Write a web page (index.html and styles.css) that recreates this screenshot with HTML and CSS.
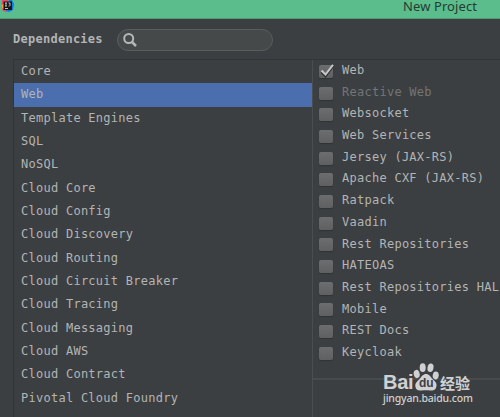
FILE: index.html
```html
<!DOCTYPE html>
<html lang="en">
<head>
<meta charset="utf-8">
<title>New Project</title>
<link rel="stylesheet" href="styles.css">
</head>
<body>
<div class="window">
  <header class="titlebar">
    <svg class="app-icon" width="14" height="13" viewBox="0 0 14 13">
      <path d="M1 0h6l2 4-3 8-4-1L0 7z" fill="#ee4668"/>
      <path d="M0 5l3-1v5l-2-1z" fill="#f59a3e"/>
      <path d="M8 0h3l2 4-1 6-4 2-3-1z" fill="#087dea"/>
      <rect x="2.500" y="1.500" width="8.500" height="8.500" fill="#171719"/>
      <path d="M4 3h2M5 3v3M4 6h2M7.500 3h1.500v2.500L8.500 6h-1M4 8.500h3" stroke="#d5d5d5" stroke-width=".9" fill="none"/>
    </svg>
    <h1 class="title">New Project</h1>
  </header>
  <div class="toolbar">
    <span class="heading">Dependencies</span>
    <div class="search">
      <svg width="14" height="14" viewBox="0 0 14 14" fill="none" stroke="#b5b6b7"><circle cx="5.700" cy="5.500" r="4.500" stroke-width="2"/><path d="M9 9l4 4" stroke-width="2.500"/></svg>
    </div>
  </div>
  <main class="content">
    <ul class="categories">
      <li>Core</li>
      <li class="selected">Web</li>
      <li>Template Engines</li>
      <li>SQL</li>
      <li>NoSQL</li>
      <li>Cloud Core</li>
      <li>Cloud Config</li>
      <li>Cloud Discovery</li>
      <li>Cloud Routing</li>
      <li>Cloud Circuit Breaker</li>
      <li>Cloud Tracing</li>
      <li>Cloud Messaging</li>
      <li>Cloud AWS</li>
      <li>Cloud Contract</li>
      <li>Pivotal Cloud Foundry</li>
    </ul>
    <section class="details">
      <ul class="options">
        <li><i class="box"><svg width="16" height="14" viewBox="0 0 16 14" fill="none"><path d="M2.500 8l4 4L14 2" stroke="#303233" stroke-width="2.500"/><path d="M2.500 6.500l4 4L14 .800" stroke="#c8c8c8" stroke-width="2"/></svg></i>Web</li>
        <li class="disabled"><i class="box"></i>Reactive Web</li>
        <li><i class="box"></i>Websocket</li>
        <li><i class="box"></i>Web Services</li>
        <li><i class="box"></i>Jersey (JAX-RS)</li>
        <li><i class="box"></i>Apache CXF (JAX-RS)</li>
        <li><i class="box"></i>Ratpack</li>
        <li><i class="box"></i>Vaadin</li>
        <li><i class="box"></i>Rest Repositories</li>
        <li><i class="box"></i>HATEOAS</li>
        <li><i class="box"></i>Rest Repositories HAL</li>
        <li><i class="box"></i>Mobile</li>
        <li><i class="box"></i>REST Docs</li>
        <li><i class="box"></i>Keycloak</li>
      </ul>
    </section>
  </main>
  <div class="watermark">
    <div class="brand">
      <span class="bai">Bai</span>
      <span class="paw">
        <svg width="26" height="28" viewBox="0 0 26 28" fill="#d0d1d2">
          <ellipse cx="3.700" cy="11" rx="3" ry="4.200" transform="rotate(-12 3.700 11)"/>
          <ellipse cx="9.700" cy="4.700" rx="3" ry="4.400"/>
          <ellipse cx="17.500" cy="4.800" rx="3" ry="4.300" transform="rotate(10 17.500 4.800)"/>
          <ellipse cx="22.700" cy="12.500" rx="3" ry="4" transform="rotate(10 22.700 12.500)"/>
          <path d="M13 11c3 0 4.500 2.500 6 4.500 2.500 2.500 5 4 4.500 7.500-.5 4-3 5-6 4.500-3-.5-6-.5-9 0C5 28 2.500 26.500 2.300 23c-.2-3.500 2.700-5 4.700-7.500 1.500-2 3-4.500 6-4.500z"/>
        </svg>
        <span class="du">du</span>
      </span>
      <span class="cn">经验</span>
    </div>
    <div class="site">jingyan.baidu.com</div>
  </div>
</div>
</body>
</html>
```
FILE: styles.css
```css
* {
  box-sizing: border-box;
}

body {
  margin: 0;
  background: #3c3f41;
}

ul {
  list-style: none;
  margin: 0;
  padding: 0;
}

.window {
  position: relative;
  display: flex;
  flex-direction: column;
  width: 500px;
  height: 417px;
  overflow: hidden;
  background: #3c3f41;
  color: #b2b4b5;
  font: 12px "DejaVu Sans Mono", monospace;
  letter-spacing: 0.26px;
}

.titlebar {
  display: flex;
  justify-content: space-between;
  align-items: flex-start;
  height: 19px;
  flex: none;
  padding: 0 23px 0 1px;
  background: #5bbd8c;
  border-bottom: 1px solid #4e9c77;
}

.title {
  margin: 0;
  font: 13px/13px "Noto Sans", sans-serif;
  letter-spacing: 0.08px;
  color: #263b32;
}

.toolbar {
  display: flex;
  align-items: center;
  height: 40px;
  flex: none;
  padding-left: 13px;
  gap: 14px;
}

.heading {
  width: 90px;
  font-weight: bold;
  line-height: 14px;
}

.search {
  display: flex;
  align-items: center;
  width: 156px;
  height: 22px;
  margin-top: 2px;
  padding-left: 5px;
  border: 1px solid #5a5d5e;
  border-radius: 11px;
  background: #45494a;
}

.content {
  display: flex;
  flex: 1;
  margin-left: 13px;
  min-height: 0;
  border-top: 1px solid #323436;
  border-left: 1px solid #323436;
}

.categories {
  width: 298px;
}

.categories li {
  height: 23.35px;
  padding-left: 7px;
  line-height: 23.35px;
}

.categories .selected {
  background: #4b6eaf;
}

.details {
  flex: 1;
  border-left: 1px solid #4b4e50;
}

.options {
  height: 320px;
  border-bottom: 2px solid #484b4d;
}

.options li {
  display: flex;
  align-items: center;
  height: 21.7px;
  padding-left: 6px;
  line-height: 21.7px;
  white-space: nowrap;
}

.options .disabled {
  color: #737576;
}

.box {
  position: relative;
  width: 14px;
  height: 13px;
  flex: none;
  margin: 1px 9px 0 0;
  border-radius: 2px;
  background: linear-gradient(#6c6d6e, #5f6061);
  box-shadow: 0 1px 1px #303233;
}

.box svg {
  position: absolute;
  left: 0;
  top: -1px;
}

.watermark {
  position: absolute;
  left: 383px;
  top: 363px;
  color: #d0d1d2;
}

.brand {
  display: flex;
  align-items: flex-end;
  height: 28px;
  letter-spacing: 0;
}

.bai {
  width: 30px;
  font: bold 20px/18px "Liberation Sans", sans-serif;
  letter-spacing: -0.3px;
}

.paw {
  position: relative;
  width: 26px;
  height: 28px;
}

.du {
  position: absolute;
  left: 6px;
  top: 13px;
  color: #3c3f41;
  font: bold 12px/14px "Liberation Sans", sans-serif;
}

.cn {
  margin-left: 1px;
  font: bold 15px/17px "Noto Sans CJK SC", sans-serif;
}

.site {
  font: 500 10.5px/14px "Noto Sans", sans-serif;
  letter-spacing: -0.17px;
}
```
